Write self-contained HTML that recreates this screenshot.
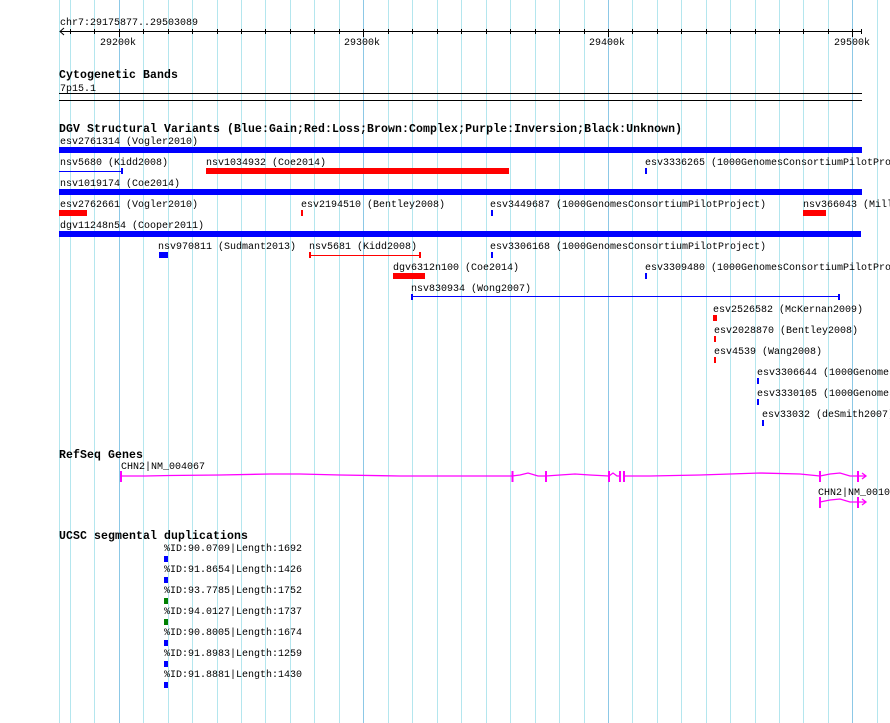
<!DOCTYPE html>
<html><head><meta charset="utf-8"><style>
html,body{margin:0;padding:0;background:#fff;}
svg{display:block;}
text{font-family:"Liberation Mono",monospace;font-size:10px;fill:#000;}
.b{font-weight:bold;font-size:11.5px;letter-spacing:0.1px;}
</style></head><body>
<svg width="890" height="723" xmlns="http://www.w3.org/2000/svg">
<g id="grid" stroke-width="1">
<line x1="59.5" y1="0" x2="59.5" y2="723" stroke="#b4e6ee"/>
<line x1="70.5" y1="0" x2="70.5" y2="723" stroke="#b4e6ee"/>
<line x1="94.5" y1="0" x2="94.5" y2="723" stroke="#b4e6ee"/>
<line x1="119.5" y1="0" x2="119.5" y2="723" stroke="#8cc8e6"/>
<line x1="143.5" y1="0" x2="143.5" y2="723" stroke="#b4e6ee"/>
<line x1="168.5" y1="0" x2="168.5" y2="723" stroke="#b4e6ee"/>
<line x1="192.5" y1="0" x2="192.5" y2="723" stroke="#b4e6ee"/>
<line x1="217.5" y1="0" x2="217.5" y2="723" stroke="#b4e6ee"/>
<line x1="241.5" y1="0" x2="241.5" y2="723" stroke="#b4e6ee"/>
<line x1="265.5" y1="0" x2="265.5" y2="723" stroke="#b4e6ee"/>
<line x1="290.5" y1="0" x2="290.5" y2="723" stroke="#b4e6ee"/>
<line x1="314.5" y1="0" x2="314.5" y2="723" stroke="#b4e6ee"/>
<line x1="339.5" y1="0" x2="339.5" y2="723" stroke="#b4e6ee"/>
<line x1="363.5" y1="0" x2="363.5" y2="723" stroke="#8cc8e6"/>
<line x1="388.5" y1="0" x2="388.5" y2="723" stroke="#b4e6ee"/>
<line x1="412.5" y1="0" x2="412.5" y2="723" stroke="#b4e6ee"/>
<line x1="437.5" y1="0" x2="437.5" y2="723" stroke="#b4e6ee"/>
<line x1="461.5" y1="0" x2="461.5" y2="723" stroke="#b4e6ee"/>
<line x1="486.5" y1="0" x2="486.5" y2="723" stroke="#b4e6ee"/>
<line x1="510.5" y1="0" x2="510.5" y2="723" stroke="#b4e6ee"/>
<line x1="535.5" y1="0" x2="535.5" y2="723" stroke="#b4e6ee"/>
<line x1="559.5" y1="0" x2="559.5" y2="723" stroke="#b4e6ee"/>
<line x1="584.5" y1="0" x2="584.5" y2="723" stroke="#b4e6ee"/>
<line x1="608.5" y1="0" x2="608.5" y2="723" stroke="#8cc8e6"/>
<line x1="632.5" y1="0" x2="632.5" y2="723" stroke="#b4e6ee"/>
<line x1="657.5" y1="0" x2="657.5" y2="723" stroke="#b4e6ee"/>
<line x1="681.5" y1="0" x2="681.5" y2="723" stroke="#b4e6ee"/>
<line x1="706.5" y1="0" x2="706.5" y2="723" stroke="#b4e6ee"/>
<line x1="730.5" y1="0" x2="730.5" y2="723" stroke="#b4e6ee"/>
<line x1="755.5" y1="0" x2="755.5" y2="723" stroke="#b4e6ee"/>
<line x1="779.5" y1="0" x2="779.5" y2="723" stroke="#b4e6ee"/>
<line x1="803.5" y1="0" x2="803.5" y2="723" stroke="#b4e6ee"/>
<line x1="828.5" y1="0" x2="828.5" y2="723" stroke="#b4e6ee"/>
<line x1="852.5" y1="0" x2="852.5" y2="723" stroke="#8cc8e6"/>
<line x1="877.5" y1="0" x2="877.5" y2="723" stroke="#b4e6ee"/>
</g>
<text x="60" y="25">chr7:29175877..29503089</text>
<line x1="60" y1="31.5" x2="862" y2="31.5" stroke="#000"/>
<polyline points="64,28 60,31.5 64,35" fill="none" stroke="#000"/>
<g stroke="#000">
<line x1="70.5" y1="29" x2="70.5" y2="34"/><line x1="94.5" y1="29" x2="94.5" y2="34"/><line x1="119.5" y1="29" x2="119.5" y2="37"/><line x1="143.5" y1="29" x2="143.5" y2="34"/><line x1="168.5" y1="29" x2="168.5" y2="34"/><line x1="192.5" y1="29" x2="192.5" y2="34"/><line x1="217.5" y1="29" x2="217.5" y2="34"/><line x1="241.5" y1="29" x2="241.5" y2="34"/><line x1="265.5" y1="29" x2="265.5" y2="34"/><line x1="290.5" y1="29" x2="290.5" y2="34"/><line x1="314.5" y1="29" x2="314.5" y2="34"/><line x1="339.5" y1="29" x2="339.5" y2="34"/><line x1="363.5" y1="29" x2="363.5" y2="37"/><line x1="388.5" y1="29" x2="388.5" y2="34"/><line x1="412.5" y1="29" x2="412.5" y2="34"/><line x1="437.5" y1="29" x2="437.5" y2="34"/><line x1="461.5" y1="29" x2="461.5" y2="34"/><line x1="486.5" y1="29" x2="486.5" y2="34"/><line x1="510.5" y1="29" x2="510.5" y2="34"/><line x1="535.5" y1="29" x2="535.5" y2="34"/><line x1="559.5" y1="29" x2="559.5" y2="34"/><line x1="584.5" y1="29" x2="584.5" y2="34"/><line x1="608.5" y1="29" x2="608.5" y2="37"/><line x1="632.5" y1="29" x2="632.5" y2="34"/><line x1="657.5" y1="29" x2="657.5" y2="34"/><line x1="681.5" y1="29" x2="681.5" y2="34"/><line x1="706.5" y1="29" x2="706.5" y2="34"/><line x1="730.5" y1="29" x2="730.5" y2="34"/><line x1="755.5" y1="29" x2="755.5" y2="34"/><line x1="779.5" y1="29" x2="779.5" y2="34"/><line x1="803.5" y1="29" x2="803.5" y2="34"/><line x1="828.5" y1="29" x2="828.5" y2="34"/><line x1="852.5" y1="29" x2="852.5" y2="37"/><line x1="861.5" y1="29" x2="861.5" y2="34"/>
</g>
<text x="100" y="45">29200k</text>
<text x="344" y="45">29300k</text>
<text x="589" y="45">29400k</text>
<text x="834" y="45">29500k</text>
<text class="b" x="59" y="78">Cytogenetic Bands</text>
<text x="60" y="91">7p15.1</text>
<line x1="59" y1="93.5" x2="862" y2="93.5" stroke="#000"/>
<line x1="59" y1="100.5" x2="862" y2="100.5" stroke="#000"/>
<text class="b" x="59" y="132">DGV Structural Variants (Blue:Gain;Red:Loss;Brown:Complex;Purple:Inversion;Black:Unknown)</text>
<text x="60" y="144">esv2761314 (Vogler2010)</text>
<rect x="59" y="147" width="803" height="6" fill="#0000ff"/>
<text x="60" y="165">nsv5680 (Kidd2008)</text>
<line x1="59" y1="171.5" x2="122" y2="171.5" stroke="#0000ff"/>
<rect x="121" y="168" width="2" height="6" fill="#0000ff"/>
<text x="206" y="165">nsv1034932 (Coe2014)</text>
<rect x="206" y="168" width="303" height="6" fill="#ff0000"/>
<text x="645" y="165">esv3336265 (1000GenomesConsortiumPilotProject)</text>
<rect x="645" y="168" width="2" height="6" fill="#0000ff"/>
<text x="60" y="186">nsv1019174 (Coe2014)</text>
<rect x="59" y="189" width="803" height="6" fill="#0000ff"/>
<text x="60" y="207">esv2762661 (Vogler2010)</text>
<rect x="59" y="210" width="28" height="6" fill="#ff0000"/>
<text x="301" y="207">esv2194510 (Bentley2008)</text>
<rect x="301" y="210" width="2" height="6" fill="#ff0000"/>
<text x="490" y="207">esv3449687 (1000GenomesConsortiumPilotProject)</text>
<rect x="491" y="210" width="2" height="6" fill="#0000ff"/>
<text x="803" y="207">nsv366043 (Mills2011)</text>
<rect x="803" y="210" width="23" height="6" fill="#ff0000"/>
<text x="60" y="228">dgv11248n54 (Cooper2011)</text>
<rect x="59" y="231" width="802" height="6" fill="#0000ff"/>
<text x="158" y="249">nsv970811 (Sudmant2013)</text>
<rect x="159" y="252" width="9" height="6" fill="#0000ff"/>
<text x="309" y="249">nsv5681 (Kidd2008)</text>
<line x1="310" y1="255.5" x2="420" y2="255.5" stroke="#ff0000"/>
<rect x="309" y="252" width="2" height="6" fill="#ff0000"/>
<rect x="419" y="252" width="2" height="6" fill="#ff0000"/>
<text x="490" y="249">esv3306168 (1000GenomesConsortiumPilotProject)</text>
<rect x="491" y="252" width="2" height="6" fill="#0000ff"/>
<text x="393" y="270">dgv6312n100 (Coe2014)</text>
<rect x="393" y="273" width="32" height="6" fill="#ff0000"/>
<text x="645" y="270">esv3309480 (1000GenomesConsortiumPilotProject)</text>
<rect x="645" y="273" width="2" height="6" fill="#0000ff"/>
<text x="411" y="291">nsv830934 (Wong2007)</text>
<line x1="411" y1="296.5" x2="839" y2="296.5" stroke="#0000ff"/>
<rect x="411" y="294" width="2" height="6" fill="#0000ff"/>
<rect x="838" y="294" width="2" height="6" fill="#0000ff"/>
<text x="713" y="312">esv2526582 (McKernan2009)</text>
<rect x="713" y="315" width="4" height="6" fill="#ff0000"/>
<text x="714" y="333">esv2028870 (Bentley2008)</text>
<rect x="714" y="336" width="2" height="6" fill="#ff0000"/>
<text x="714" y="354">esv4539 (Wang2008)</text>
<rect x="714" y="357" width="2" height="6" fill="#ff0000"/>
<text x="757" y="375">esv3306644 (1000GenomesConsortiumPilotProject)</text>
<rect x="757" y="378" width="2" height="6" fill="#0000ff"/>
<text x="757" y="396">esv3330105 (1000GenomesConsortiumPilotProject)</text>
<rect x="757" y="399" width="2" height="6" fill="#0000ff"/>
<text x="762" y="417">esv33032 (deSmith2007)</text>
<rect x="762" y="420" width="2" height="6" fill="#0000ff"/>
<text class="b" x="59" y="458">RefSeq Genes</text>
<text x="121" y="469">CHN2|NM_004067</text>
<g stroke="#ff00ff" fill="none" stroke-width="1.3">
<polyline points="121,476 145,476 170,475.5 220,475 270,474 300,474 340,475 400,476 512,476"/>
<polyline points="512,476 520,475 528,473 538,476 546,476 560,475 575,474 590,475 609,476"/>
<polyline points="609,476 613,473 617,476 620,476"/>
<polyline points="624,476 650,476 700,475 730,474 760,473 800,474 820,476"/>
<polyline points="820,476 830,474 840,473 850,476 866,476"/>
<polyline points="862,473 866,476 862,479"/>
<line x1="121" y1="471" x2="121" y2="482" stroke-width="2"/>
<line x1="512.5" y1="471" x2="512.5" y2="482" stroke-width="2"/>
<line x1="546" y1="471" x2="546" y2="482" stroke-width="2"/>
<line x1="609" y1="471" x2="609" y2="482" stroke-width="2"/>
<line x1="620" y1="471" x2="620" y2="482" stroke-width="2"/>
<line x1="624" y1="471" x2="624" y2="482" stroke-width="2"/>
<line x1="820" y1="471" x2="820" y2="482" stroke-width="2"/>
<line x1="858" y1="471" x2="858" y2="482" stroke-width="2"/>
<polyline points="820,502 830,500 840,499 850,502 866,502"/>
<polyline points="862,499 866,502 862,505"/>
<line x1="820" y1="497" x2="820" y2="508" stroke-width="2"/>
<line x1="858" y1="497" x2="858" y2="508" stroke-width="2"/>
</g>
<text x="818" y="495">CHN2|NM_001039936</text>
<text class="b" x="59" y="539">UCSC segmental duplications</text>
<text x="164" y="551">%ID:90.0709|Length:1692</text>
<rect x="164" y="556" width="4" height="6" fill="#0000ff"/>
<text x="164" y="572">%ID:91.8654|Length:1426</text>
<rect x="164" y="577" width="4" height="6" fill="#0000ff"/>
<text x="164" y="593">%ID:93.7785|Length:1752</text>
<rect x="164" y="598" width="4" height="6" fill="#008000"/>
<text x="164" y="614">%ID:94.0127|Length:1737</text>
<rect x="164" y="619" width="4" height="6" fill="#008000"/>
<text x="164" y="635">%ID:90.8005|Length:1674</text>
<rect x="164" y="640" width="4" height="6" fill="#0000ff"/>
<text x="164" y="656">%ID:91.8983|Length:1259</text>
<rect x="164" y="661" width="4" height="6" fill="#0000ff"/>
<text x="164" y="677">%ID:91.8881|Length:1430</text>
<rect x="164" y="682" width="4" height="6" fill="#0000ff"/>
</svg>
</body></html>
